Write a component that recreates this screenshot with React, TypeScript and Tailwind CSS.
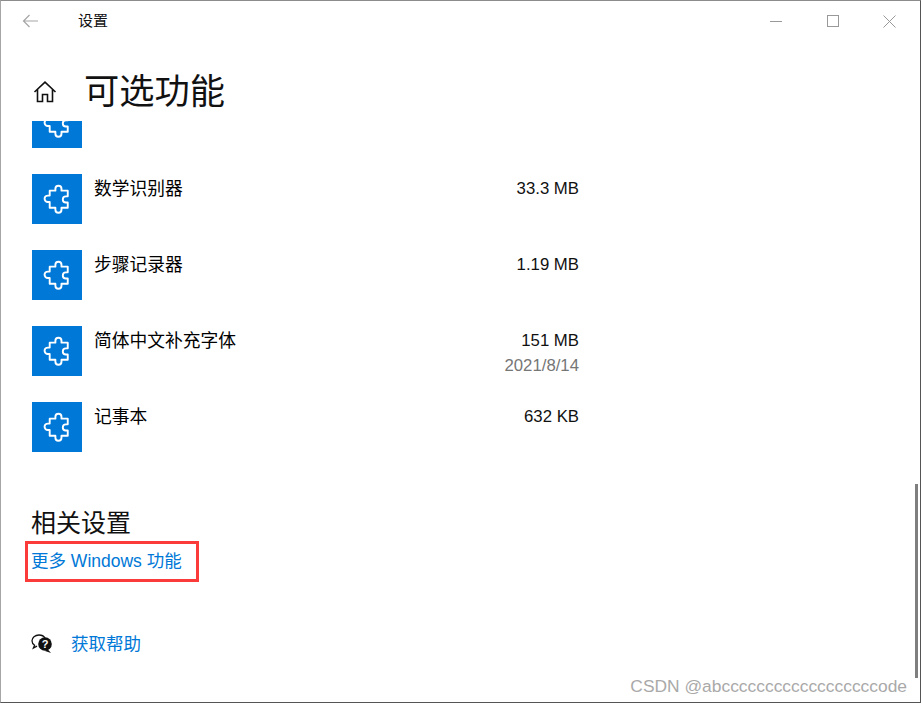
import { ReactNode } from "react";

const base = "font-['Liberation_Sans','Noto_Sans_CJK_SC',sans-serif]";

interface Feature {
  name: string;
  size: string;
  date?: string;
}

const features: Feature[] = [
  { name: "数学识别器", size: "33.3 MB" },
  { name: "步骤记录器", size: "1.19 MB" },
  { name: "简体中文补充字体", size: "151 MB", date: "2021/8/14" },
  { name: "记事本", size: "632 KB" },
];

function PuzzleIcon() {
  return (
    <svg width="28" height="32" viewBox="0 0 28 32" fill="none" stroke="white" strokeWidth="2" strokeLinejoin="round">
      <path d="M6 7h6V5a3.2 3.2 0 0 1 6.4 0v2h6.6v6h-2a3 3 0 0 0 0 6.4h2v5.6h-6.6v2a3.2 3.2 0 0 1-6.4 0v-2H6v-6H4a3.4 3.4 0 0 1 0-6.8h2z" transform="translate(1 1) scale(0.95)" />
    </svg>
  );
}

function Tile({ children }: { children?: ReactNode }) {
  return <div className="w-[50px] h-[50px] shrink-0 bg-[#0078d7] flex items-center justify-center">{children}</div>;
}

function FeatureRow({ item }: { item: Feature }) {
  return (
    <div className="flex h-[50px] mb-[26px]">
      <Tile>
        <PuzzleIcon />
      </Tile>
      <div className="w-[235px] pl-[12px] pt-[1px] text-[17.75px] leading-[28px] text-black">{item.name}</div>
      <div className="w-[262px] pt-[1px] text-right text-[16.75px] leading-[28px]">
        <div className="text-[#111]">{item.size}</div>
        {item.date && <div className="text-[#767676] mt-[-3px]">{item.date}</div>}
      </div>
    </div>
  );
}

export default function App() {
  return (
    <div className={`relative w-[921px] h-[703px] overflow-hidden bg-white border-t border-l border-r border-b border-t-[#8c8c8c] border-l-[#a6a6a6] border-r-[#555] border-b-[#555] ${base}`}>
      {/* title bar */}
      <div className="flex items-center h-[40px]">
        <div className="w-[77px] pl-[21px]">
          <svg width="17" height="14" viewBox="0 0 17 14" fill="none" stroke="#a6a6a6" strokeWidth="1.2">
            <path d="M16 7H1.5M7.5 1 1.5 7l6 6" />
          </svg>
        </div>
        <div className="text-[15px] text-[#111] pt-[1px]">设置</div>
        <div className="ml-auto flex items-center">
          <div className="w-[57px] flex justify-center">
            <div className="w-[12px] h-px bg-[#999]" />
          </div>
          <div className="w-[57px] flex justify-center">
            <div className="w-[12px] h-[12px] border border-[#999]" />
          </div>
          <div className="w-[57px] flex justify-center mr-[2px]">
            <svg width="13" height="13" viewBox="0 0 13 13" stroke="#999" strokeWidth="1">
              <path d="M.5.5l12 12M12.5.5l-12 12" />
            </svg>
          </div>
        </div>
      </div>

      {/* heading */}
      <div className="flex items-center h-[80px] pl-[32px] pt-[19px]">
        <svg width="24" height="22" viewBox="0 0 24 22" fill="none" stroke="#111" strokeWidth="1.6" strokeLinejoin="miter" className="mt-[2px]">
          <path d="M1.5 11 12 1.2 22.5 11M4.5 8.5V20.5H9.5V13.5H14.5V20.5H19.5V8.5" />
        </svg>
        <h1 className="ml-[27px] pt-[2px] text-[35.25px] leading-[48px] text-[#111]">可选功能</h1>
      </div>

      {/* list */}
      <div className="h-[334px] overflow-hidden pl-[31px]">
        <div className="mt-[-23px]">
          <div className="h-[50px] mb-[26px]">
            <Tile>
              <PuzzleIcon />
            </Tile>
          </div>
          {features.map((item) => (
            <FeatureRow key={item.name} item={item} />
          ))}
        </div>
      </div>

      {/* related */}
      <div className="pl-[30px] pt-[50px]">
        <h2 className="text-[25px] leading-[36px] text-[#111]">相关设置</h2>
        <div className="ml-[-6px] w-[174px] h-[41px] border-[3px] border-[#fb3a3a] pl-[3px] pb-[2px] flex items-center">
          <a className="text-[17.5px] leading-[28px] text-[#0078d7] whitespace-nowrap">更多 Windows 功能</a>
        </div>
      </div>

      <div className="flex items-center pl-[30px] mt-[48px]">
        <svg width="21" height="20" viewBox="0 0 21 20" className="shrink-0">
          <path d="M8 1C4 1 1 3.6 1 6.8c0 1.9 1 3.5 2.6 4.5L2.4 14l3.6-1.8" fill="none" stroke="#111" strokeWidth="1.3" />
          <path d="M8 1c3 0 5 1.2 6 3" fill="none" stroke="#111" strokeWidth="1.3" />
          <circle cx="14" cy="10" r="6.8" fill="#111" />
          <path d="M16.5 15l3.5 4-6-2z" fill="#111" />
          <text x="14" y="14" textAnchor="middle" fontSize="11" fontWeight="700" fill="white" fontFamily="Liberation Sans, sans-serif">?</text>
        </svg>
        <a className="ml-[19px] text-[17.5px] leading-[28px] text-[#0078d7]">获取帮助</a>
      </div>

      {/* scrollbar */}
      <div className="absolute left-[914px] top-[483px] w-[3px] h-[194px] bg-[#7f7f7f]" />

      {/* watermark */}
      <div className="absolute right-[13px] top-[672px] text-[17.4px] leading-[26px] text-[#a9a9a9] whitespace-nowrap">
        CSDN @abccccccccccccccccccode
      </div>
    </div>
  );
}
